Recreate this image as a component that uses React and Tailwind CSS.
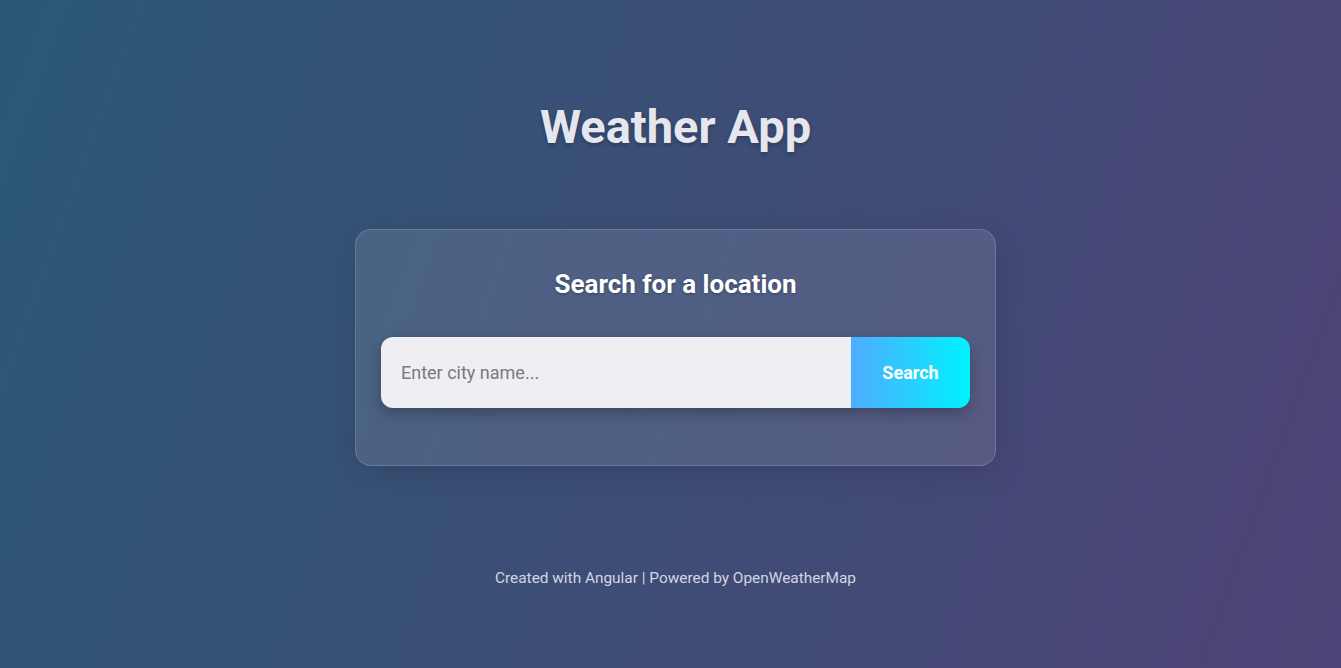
import React, { useState } from "react";

export default function App() {
  const [city, setCity] = useState("");

  return (
    <div
      className="min-h-screen h-[668px] w-full flex flex-col items-center pl-[10px] bg-[linear-gradient(110deg,#2b5876,#4e4376)] text-white"
      style={{ fontFamily: "Roboto, 'Liberation Sans', sans-serif" }}
    >
      <h1 className="mt-[95px] text-[47px] leading-[64px] font-bold text-[#e6e7ee] [text-shadow:0_2px_4px_rgba(0,0,0,0.25)]">
        Weather App
      </h1>

      {/* search card */}
      <div className="mt-[70px] w-[641px] h-[237px] rounded-2xl border border-white/15 bg-white/10 shadow-[0_8px_32px_rgba(0,0,0,0.12)] px-[25px] pt-[36px]">
        <h2 className="text-center text-[26px] leading-[36px] font-bold text-white [text-shadow:0_1px_3px_rgba(0,0,0,0.3)]">
          Search for a location
        </h2>
        <form
          onSubmit={(e) => e.preventDefault()}
          className="mt-[35px] flex h-[71px] rounded-xl overflow-hidden shadow-[0_6px_16px_rgba(0,0,0,0.25)]"
        >
          <input
            type="text"
            value={city}
            onChange={(e) => setCity(e.target.value)}
            placeholder="Enter city name..."
            className="flex-1 bg-[#efeff3] px-5 text-[18px] text-gray-800 placeholder:text-[#7a7a80] outline-none"
          />
          <button
            type="submit"
            className="w-[119px] bg-[linear-gradient(90deg,#4facfe,#00f2fe)] text-[18px] font-bold text-white"
          >
            Search
          </button>
        </form>
      </div>

      <p className="mt-[101px] text-[15.4px] text-[#d3d6e2]">
        Created with Angular | Powered by OpenWeatherMap
      </p>
    </div>
  );
}
